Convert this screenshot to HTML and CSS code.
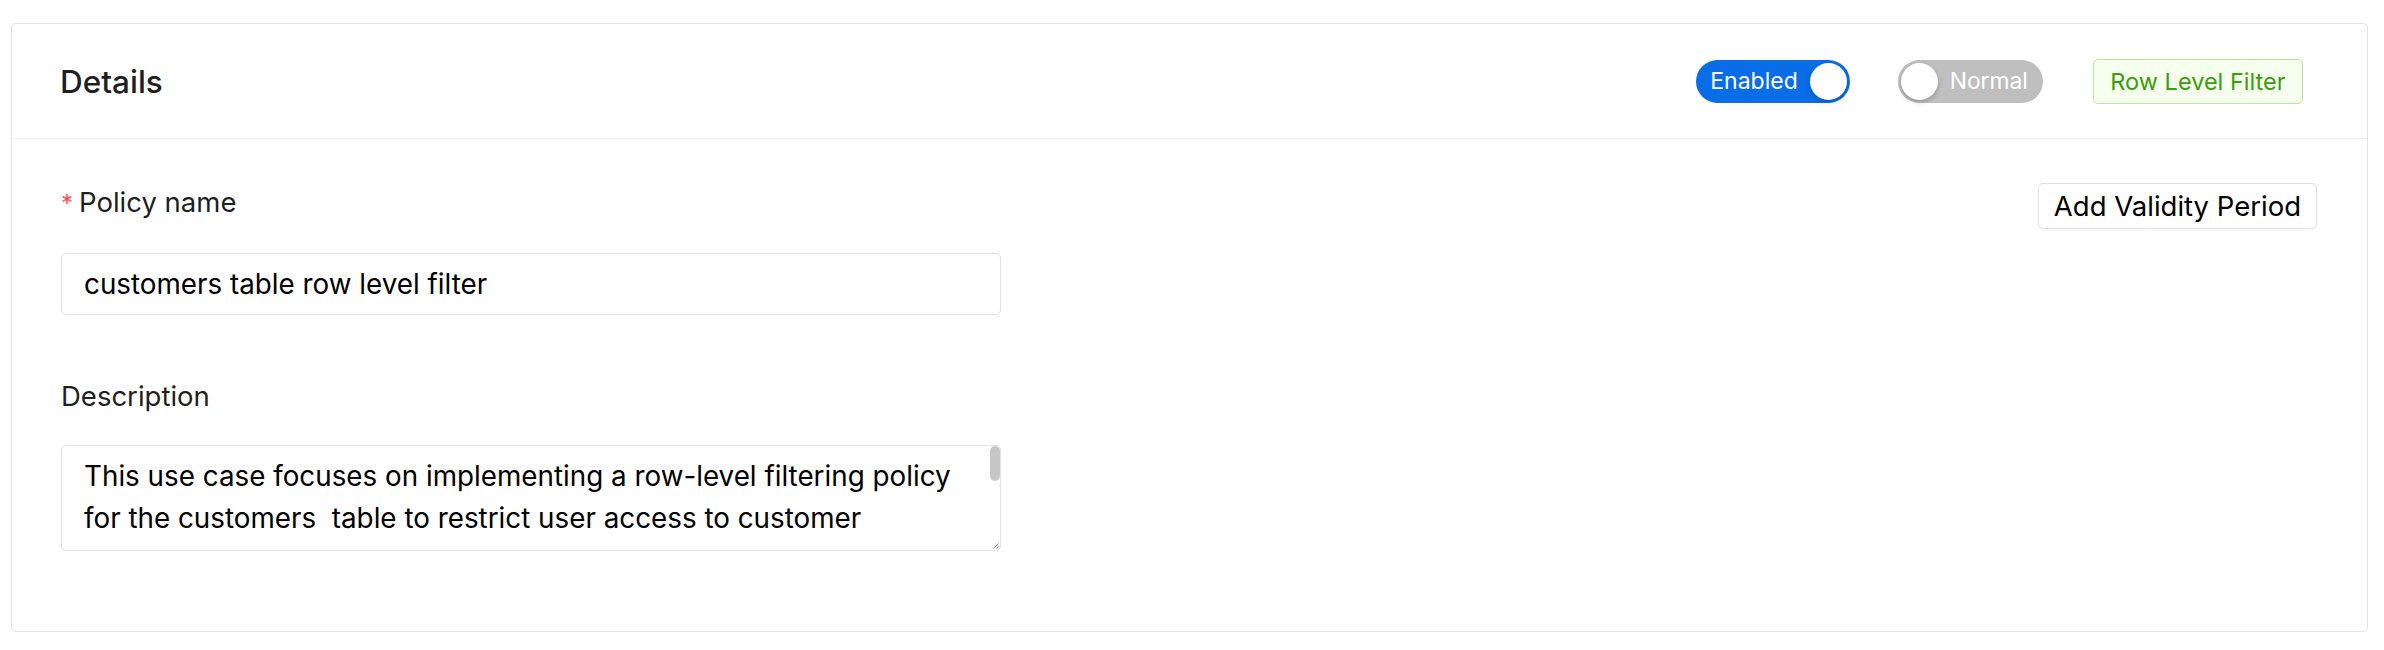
FILE: index.html
```html
<!DOCTYPE html>
<html>
<head>
<meta charset="utf-8">
<title>Details</title>
<link rel="stylesheet" href="styles.css">
</head>
<body>
<div class="page">
  <section class="card">
    <header class="card-head">
      <h2 class="card-title">Details</h2>
      <div class="head-actions">
        <button class="switch switch-on" type="button" role="switch" aria-checked="true">
          <span class="switch-text">Enabled</span>
          <span class="switch-knob"></span>
        </button>
        <button class="switch switch-off" type="button" role="switch" aria-checked="false">
          <span class="switch-knob"></span>
          <span class="switch-text">Normal</span>
        </button>
        <span class="tag-green">Row Level Filter</span>
      </div>
    </header>
    <div class="card-body">
      <form class="form">
        <div class="form-item">
          <label class="form-label" for="policy-name"><span class="req">*</span>Policy name</label>
          <input class="text-input" id="policy-name" type="text" value="customers table row level filter">
        </div>
        <div class="form-item">
          <label class="form-label" for="policy-desc">Description</label>
          <div class="area-box">
            <textarea class="text-area" id="policy-desc">This use case focuses on implementing a row-level filtering policy for the customers  table to restrict user access to customer records based on the region assigned to each user. Users can only view rows that belong to their own region, while administrators keep full access to every row in the table.</textarea>
            <span class="area-thumb"></span>
            <svg class="area-grip" width="7" height="7" viewBox="0 0 7 7"><path d="M6.5 1.5 L1.5 6.5 M6.5 4.5 L4.5 6.5" stroke="#7a7a7a" stroke-width="1"/></svg>
          </div>
        </div>
      </form>
      <button class="btn" type="button">Add Validity Period</button>
    </div>
  </section>
</div>
</body>
</html>
```
FILE: styles.css
```css
*{box-sizing:border-box;}
body{margin:0;font-family:Inter,"Noto Sans",sans-serif;color:#1f1f1f;background:#fff;}
.page{padding:23px 16px 0 11px;}
.card{border:1px solid #e3e3e8;border-radius:5px;background:#fff;}
.card-head{height:115px;border-bottom:1px solid #f0f0f0;display:flex;align-items:center;justify-content:space-between;padding:0 64px 0 48px;}
.card-title{margin:0;font-size:31.5px;font-weight:500;color:#1f1f1f;}
.head-actions{display:flex;align-items:center;gap:48px;}
.switch{display:flex;align-items:center;height:43px;border:0;border-radius:22px;font-family:inherit;font-size:23px;color:#fff;cursor:pointer;line-height:1;}
.switch-on{background:#0a6de8;padding:0 3px 0 14px;gap:12px;}
.switch-off{background:#bfbfbf;padding:0 15px 0 3px;gap:12px;font-size:22.8px;}
.switch-knob{width:37px;height:37px;border-radius:50%;background:#fff;box-shadow:0 2px 5px rgba(0,35,11,0.25);flex:none;}
.tag-green{display:inline-flex;align-items:center;height:45px;padding:0 16.5px;margin-left:2px;border:1.5px solid #b7eb8f;border-radius:5px;background:#f6ffed;color:#389e0d;font-size:23.5px;}
.card-body{display:flex;justify-content:space-between;align-items:flex-start;padding:43px 50px 80px 49px;}
.form{width:940px;}
.form-item + .form-item{margin-top:61px;}
.form-label{display:block;font-size:27.5px;line-height:40px;color:#1f1f1f;margin-bottom:29px;}
.req{color:#ff4d4f;margin-right:6px;font-size:24px;}
.text-input{display:block;width:100%;height:62px;border:1.5px solid #e0e0e5;border-radius:5px;padding:0 22px;font-family:inherit;font-size:27.8px;color:#000;outline:none;}
.area-box{position:relative;height:106px;border:1.5px solid #e0e0e5;border-radius:5px;padding-bottom:9px;overflow:hidden;}
.text-area{display:block;width:100%;height:94px;border:0;padding:9px 40px 0 22px;font-family:inherit;font-size:27.8px;line-height:42px;color:#000;outline:none;overflow:hidden;resize:none;background:transparent;}
.area-thumb{position:absolute;top:0;right:0;width:10px;height:35px;border-radius:5px;background:#c6c6c6;}
.area-grip{position:absolute;right:1px;bottom:1px;}
.btn{margin-top:1px;height:46px;padding:0 15px;border:1.5px solid #e0e0e5;border-radius:5px;background:#fff;font-family:inherit;font-size:27.5px;color:#000;box-shadow:0 2px 0 rgba(0,0,0,0.02);cursor:pointer;}
```
